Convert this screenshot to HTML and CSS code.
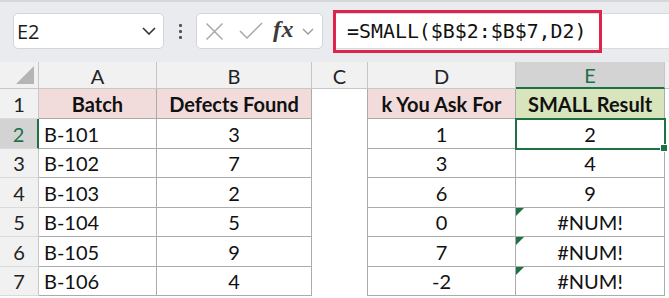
FILE: index.html
```html
<!DOCTYPE html>
<html>
<head>
<meta charset="utf-8">
<link rel="stylesheet" href="styles.css">
</head>
<body>
<div class="toolbar">
  <div class="namebox"><span class="nb-text">E2</span>
    <svg class="chev" width="14" height="8" viewBox="0 0 14 8"><path d="M1 1 L7 7 L13 1" fill="none" stroke="#333" stroke-width="1.6"/></svg>
  </div>
  <div class="dots"><i></i><i></i><i></i></div>
  <div class="fxbox">
    <svg class="ic-x" width="19" height="19" viewBox="0 0 19 19"><path d="M1.5 1.5 L17.5 17.5 M17.5 1.5 L1.5 17.5" stroke="#a8a8a8" stroke-width="1.5" fill="none"/></svg>
    <svg class="ic-check" width="24" height="18" viewBox="0 0 24 18"><path d="M1 9 L8 16 L23 1" stroke="#a8a8a8" stroke-width="1.5" fill="none"/></svg>
    <span class="fx">fx</span>
    <svg class="chev2" width="12" height="7" viewBox="0 0 12 7"><path d="M1 1 L6 6 L11 1" fill="none" stroke="#9a9a9a" stroke-width="1.4"/></svg>
  </div>
  <div class="formula">
    <span class="ftext">=SMALL($B$2:$B$7,D2)</span>
    <div class="redbox"></div>
  </div>
</div>
<div class="sheet">
  <div class="corner"><span class="tri"></span></div>
  <div class="ch">A</div>
  <div class="ch">B</div>
  <div class="ch">C</div>
  <div class="ch">D</div>
  <div class="ch sel">E</div>
  <div class="ch rest"></div>

  <div class="rh">1</div>
  <div class="c hd pink">Batch</div>
  <div class="c hd pink">Defects Found</div>
  <div class="c gap"></div>
  <div class="c hd pink">k You Ask For</div>
  <div class="c hd green">SMALL Result</div>
  <div class="c rest"></div>

  <div class="rh sel">2</div>
  <div class="c l">B-101</div>
  <div class="c">3</div>
  <div class="c gap"></div>
  <div class="c">1</div>
  <div class="c active">2<span class="handle"></span></div>
  <div class="c rest"></div>

  <div class="rh">3</div>
  <div class="c l">B-102</div>
  <div class="c">7</div>
  <div class="c gap"></div>
  <div class="c">3</div>
  <div class="c">4</div>
  <div class="c rest"></div>

  <div class="rh">4</div>
  <div class="c l">B-103</div>
  <div class="c">2</div>
  <div class="c gap"></div>
  <div class="c">6</div>
  <div class="c">9</div>
  <div class="c rest"></div>

  <div class="rh">5</div>
  <div class="c l">B-104</div>
  <div class="c">5</div>
  <div class="c gap"></div>
  <div class="c">0</div>
  <div class="c err">#NUM!</div>
  <div class="c rest"></div>

  <div class="rh">6</div>
  <div class="c l">B-105</div>
  <div class="c">9</div>
  <div class="c gap"></div>
  <div class="c">7</div>
  <div class="c err">#NUM!</div>
  <div class="c rest"></div>

  <div class="rh">7</div>
  <div class="c l">B-106</div>
  <div class="c">4</div>
  <div class="c gap"></div>
  <div class="c">-2</div>
  <div class="c err">#NUM!</div>
  <div class="c rest"></div>
</div>
</body>
</html>
```
FILE: styles.css
```css
* { box-sizing: border-box; }
html, body { margin: 0; padding: 0; background: #fff; }
body { width: 669px; height: 298px; overflow: hidden; font-family: Lato, "Noto Sans", sans-serif; color: #111; }

.toolbar {
  height: 62px;
  background: #e9ebee;
  border-top: 2px solid #d5d7da;
  display: flex;
  align-items: flex-start;
  padding-top: 11px;
}
.namebox {
  margin-left: 13px;
  width: 151px;
  height: 36px;
  background: #fff;
  border: 1px solid #d3d5d8;
  border-radius: 5px;
  display: flex;
  align-items: center;
  justify-content: space-between;
  padding: 0 7px 0 3px;
}
.nb-text { font-family: "Open Sans", sans-serif; font-size: 20px; color: #1a1a1a; }
.dots { margin-left: 13px; width: 6px; height: 36px; display: flex; flex-direction: column; align-items: center; justify-content: center; gap: 3px; }
.dots i { display: block; width: 3px; height: 3px; background: #555; border-radius: 1px; }
.fxbox {
  margin-left: 13px;
  width: 127px;
  height: 36px;
  background: #fff;
  border: 1px solid #d3d5d8;
  border-radius: 5px;
  display: flex;
  align-items: center;
  padding-left: 8px;
}
.ic-x { margin-right: 15px; }
.ic-check { margin-right: 10px; }
.fx { font-family: "Liberation Serif", serif; font-style: italic; font-weight: 700; font-size: 24px; color: #3a3a3a; margin-top: -4px; letter-spacing: 0.5px; }
.chev2 { margin-left: 8px; }
.formula {
  position: relative;
  margin-left: 10px;
  flex: 1;
  height: 36px;
  background: #fff;
  border: 1px solid #d8dadd;
  border-right: none;
  display: flex;
  align-items: center;
  padding-left: 13px;
}
.ftext { font-family: "DejaVu Sans Mono", monospace; font-size: 19.9px; color: #111; letter-spacing: 0; }
.redbox {
  position: absolute;
  left: -1px;
  top: -4px;
  width: 269px;
  height: 43px;
  border: 3px solid #e0234e;
}

.sheet {
  display: grid;
  grid-template-columns: 39px 118px 155px 56px 148px 149px 1fr;
  grid-template-rows: 27px 30px 30px 29px 30px 29px 30px 29px;
  font-size: 20px;
}
.corner { background: #f1f1f1; border-right: 1px solid #c7c7c7; border-bottom: 1px solid #c7c7c7; position: relative; }
.tri { position: absolute; right: 4px; bottom: 4px; width: 0; height: 0; border-left: 18px solid transparent; border-bottom: 18px solid #b5b5b5; }
.ch {
  background: #f1f1f1;
  border-right: 1px solid #c7c7c7;
  border-bottom: 1px solid #c7c7c7;
  display: flex; align-items: center; justify-content: center;
  color: #222;
  padding-top: 1px;
}
.ch.sel { background: #d3d3d3; color: #1e7145; border-bottom: 2px solid #1e7145; }
.ch.rest { border-right: none; background: #f1f1f1; }
.rh {
  background: #f1f1f1;
  border-right: 1px solid #c7c7c7;
  border-bottom: 1px solid #dadada;
  display: flex; align-items: center; justify-content: center;
  color: #222;
}
.rh.sel { background: #d3d3d3; color: #1e7145; border-right: 2px solid #1e7145; }
.c {
  border-right: 1px solid #ababab;
  border-bottom: 1px solid #ababab;
  display: flex; align-items: center; justify-content: center;
  position: relative;
  color: #111;
}
.c.l { justify-content: flex-start; padding-left: 5px; }
.c.hd { font-weight: 700; }
.pink { background: #f2dcdb; }
.green { background: #d8e4bc; }
.c.gap { border-bottom: none; }
.c.rest { border: none; }
.c.active { outline: 2px solid #1e7145; outline-offset: -1px; z-index: 2; }
.handle { position: absolute; right: -4px; bottom: -4px; width: 8px; height: 8px; background: #1e7145; border: 1px solid #fff; z-index: 3; }
.c.err::before {
  content: "";
  position: absolute;
  left: 0; top: 0;
  width: 0; height: 0;
  border-top: 8px solid #1e7145;
  border-right: 8px solid transparent;
}
```
